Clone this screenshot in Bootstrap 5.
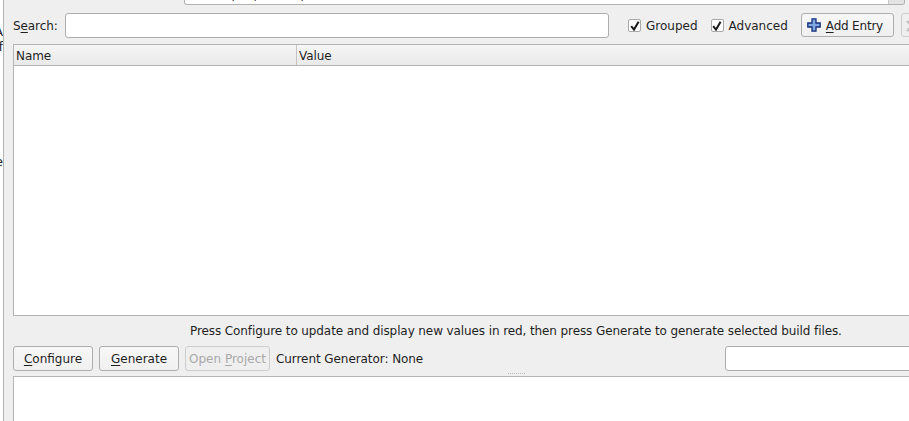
<!DOCTYPE html>
<html lang="en">
<head>
    <meta charset="UTF-8">
    <title>CMake</title>
    <link href="https://cdn.jsdelivr.net/npm/bootstrap@5.3.0/dist/css/bootstrap.min.css" rel="stylesheet">
    <style>
        html, body {
            height: 421px;
            overflow: hidden;
        }
        body {
            background: #fff;
            color: #1f1f1f;
            font-family: "DejaVu Sans", sans-serif;
            font-size: 12px;
            letter-spacing: -0.1px;
            line-height: 15px;
        }
        u { text-underline-offset: 2px; }
        .side-strip {
            width: 4px;
            flex: none;
            padding-top: 24px;
            border-right: 1px solid #b4b4b4;
            overflow: hidden;
            white-space: nowrap;
            font-size: 13px;
        }
        .side-strip span {
            display: block;
            direction: rtl;
            width: 3px;
        }
        .side-strip .frag-gap { margin-top: 100px; }
        .main-pane {
            width: 905px;
            height: 421px;
            flex: none;
            background: #efefef;
            padding-left: 9px;
            overflow: hidden;
        }
        .pane-inner { width: 920px; }
        .source-box {
            height: 5px;
            margin-left: 171px;
            width: 721px;
            margin-bottom: 8px;
            background: #fff;
            border: 1px solid #b0b0b0;
            border-top: 0;
            border-radius: 0 0 3px 3px;
            overflow: hidden;
        }
        .source-text {
            margin-top: -13px;
            padding-left: 5px;
            white-space: nowrap;
        }
        .source-arrow {
            width: 16px;
            background: #e4e4e4;
            border-left: 1px solid #c8c8c8;
        }
        .qt-input {
            background: #fff;
            border: 1px solid #aeaeae;
            border-radius: 3px;
            height: 25px;
        }
        .search-label { width: 45px; flex: none; white-space: nowrap; padding-top: 1px; }
        .search-input { width: 544px; margin-left: 7px; }
        .check-grouped { margin-left: 19px; }
        .check-advanced { margin-left: 13px; }
        .qt-check {
            width: 13px;
            height: 13px;
            background: #fff;
            border: 1px solid #a8a8a8;
            border-radius: 2px;
            margin-right: 5px;
            flex: none;
        }
        .check-label { white-space: nowrap; padding-top: 1px; letter-spacing: 0; }
        .qt-btn {
            height: 25px;
            flex: none;
            background: linear-gradient(#f7f7f7, #f0f0f0);
            border: 1px solid #aeaeae;
            border-radius: 3px;
            color: #1f1f1f;
            font-size: 12px;
            line-height: 15px;
            padding: 1px 0 0;
            white-space: nowrap;
        }
        .qt-btn:disabled { color: #a9a9a9; border-color: #cdcdcd; background: #efefef; opacity: 1; }
        .btn-add { width: 93px; margin-left: 13px; padding: 0 0 0 5px; height: 24px; }
        .btn-add span { padding-top: 2px; letter-spacing: -0.2px; }
        .btn-remove { width: 20px; margin-left: 7px; height: 24px; padding-left: 4px; }
        .btn-configure, .btn-generate { width: 80px; }
        .btn-generate, .btn-open { margin-left: 6px; }
        .btn-open { width: 85px; }
        .add-icon { margin-right: 5px; }
        .generator-text { margin-left: 6px; flex: none; white-space: nowrap; padding-top: 1px; letter-spacing: -0.07px; }
        .generator-input { width: 208px; flex: none; }
        .tree-box {
            height: 272px;
            margin-top: 6px;
            background: #fff;
            border: 1px solid #b4b4b4;
            border-right: 0;
        }
        .tree-head {
            height: 21px;
            background: linear-gradient(#f6f6f6, #e9e9e9);
            border-bottom: 1px solid #b4b4b4;
            padding-top: 4px;
        }
        .head-name { width: 283px; padding-left: 2px; margin-top: -4px; padding-top: 4px; border-right: 1px solid #c4c4c4; height: 20px; }
        .head-value { padding-left: 2px; }
        .hint-line { height: 30px; padding-left: 177px; padding-top: 8px; white-space: nowrap; }
        .grip {
            height: 3px;
            width: 17px;
            margin-left: 495px;
            margin-top: 2px;
            border-top: 1px dotted #bdbdbd;
        }
        .output-box {
            height: 45px;
            background: #fff;
            border: 1px solid #b4b4b4;
            border-right: 0;
            border-bottom: 0;
        }
    </style>
</head>
<body>
<div class="d-flex">
    <div class="side-strip">
        <span>A</span>
        <span>f</span>
        <span class="frag-gap">e</span>
    </div>
    <div class="main-pane">
        <div class="pane-inner">
            <div class="source-box d-flex justify-content-between">
                <div class="source-text">/home/pi/opencv/opencv-3.4.1/</div>
                <div class="source-arrow"></div>
            </div>

            <div class="d-flex align-items-center">
                <span class="search-label">S<u>e</u>arch:</span>
                <div class="qt-input search-input"></div>
                <div class="d-flex align-items-center check-grouped">
                    <span class="qt-check d-flex align-items-center justify-content-center">
                        <svg width="10" height="10" viewBox="0 0 10 10"><path d="M1.2 5.2 4 8.6 8.6 .8" fill="none" stroke="#1a1a1a" stroke-width="2"/></svg>
                    </span>
                    <span class="check-label">Grouped</span>
                </div>
                <div class="d-flex align-items-center check-advanced">
                    <span class="qt-check d-flex align-items-center justify-content-center">
                        <svg width="10" height="10" viewBox="0 0 10 10"><path d="M1.2 5.2 4 8.6 8.6 .8" fill="none" stroke="#1a1a1a" stroke-width="2"/></svg>
                    </span>
                    <span class="check-label">Advanced</span>
                </div>
                <button class="qt-btn btn-add d-flex align-items-center align-self-start" type="button">
                    <svg class="add-icon" width="14" height="14" viewBox="0 0 14 14"><path d="M5 .8h4V5h4.2v4H9v4.2H5V9H.8V5H5z" fill="#7fa8e2" stroke="#16307a" stroke-width="1.3"/></svg>
                    <span><u>A</u>dd Entry</span>
                </button>
                <button class="qt-btn btn-remove d-flex align-items-center align-self-start" type="button" disabled>
                    <svg width="12" height="14" viewBox="0 0 12 14"><path d="M1 2l10 10M11 2 1 12" fill="none" stroke="#c2c2c2" stroke-width="2.4"/></svg>
                </button>
            </div>

            <div class="tree-box">
                <div class="tree-head d-flex">
                    <div class="head-name">Name</div>
                    <div class="head-value">Value</div>
                </div>
            </div>

            <div class="hint-line">Press Configure to update and display new values in red, then press Generate to generate selected build files.</div>

            <div class="d-flex align-items-center">
                <button class="qt-btn btn-configure" type="button"><u>C</u>onfigure</button>
                <button class="qt-btn btn-generate" type="button"><u>G</u>enerate</button>
                <button class="qt-btn btn-open" type="button" disabled>Open <u>P</u>roject</button>
                <span class="generator-text">Current Generator: None</span>
                <div class="qt-input generator-input ms-auto"></div>
            </div>

            <div class="grip"></div>
            <div class="output-box"></div>
        </div>
    </div>
</div>
</body>
</html>
